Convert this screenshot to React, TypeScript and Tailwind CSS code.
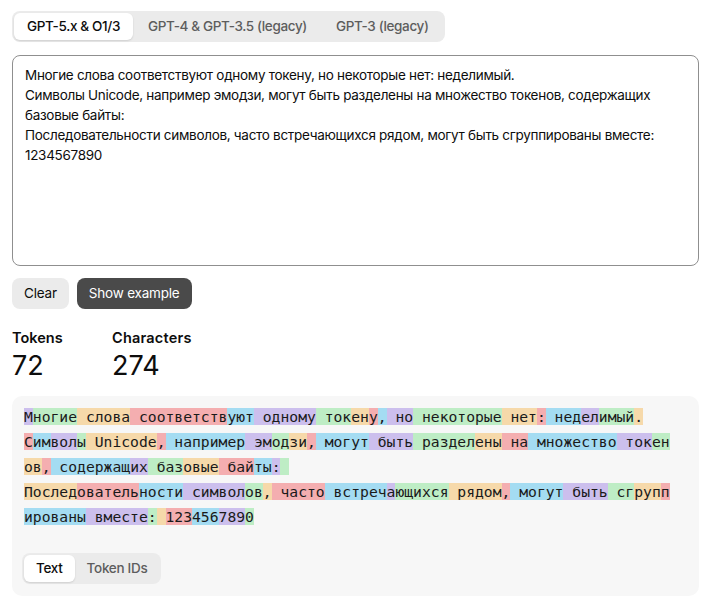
import React from "react";

const COLORS = [
  "bg-[rgba(107,64,216,0.3)]",
  "bg-[rgba(104,222,122,0.4)]",
  "bg-[rgba(244,172,54,0.4)]",
  "bg-[rgba(239,65,70,0.4)]",
  "bg-[rgba(39,181,234,0.4)]",
];

// [text, lineBreakAfter]
const TOKENS: [string, boolean][] = [
  ["М", false], ["ногие", false], [" слова", false], [" соответств", false], ["уют", false],
  [" одному", false], [" ток", false], ["ен", false], ["у", false], [",", false],
  [" но", false], [" некоторые", false], [" нет", false], [":", false], [" нед", false],
  ["ел", false], ["имый", false], [".", true],
  ["С", false], ["им", false], ["вол", false], ["ы", false], [" Unicode", false],
  [",", false], [" например", false], [" эм", false], ["од", false], ["зи", false],
  [",", false], [" могут", false], [" быть", false], [" раздел", false], ["ены", false],
  [" на", false], [" множество", false], [" ток", false], ["ен", true],
  ["ов", false], [",", false], [" содержащ", false], ["их", false], [" баз", false],
  ["овые", false], [" бай", false], ["ты", false], [":", false], ["\u00a0", true],
  ["Послед", false], ["ователь", false], ["ности", false], [" символ", false], ["ов", false],
  [",", false], [" часто", false], [" встреч", false], ["а", false], ["ющихся", false],
  [" рядом", false], [",", false], [" могут", false], [" быть", false], [" сг", false],
  ["руп", false], ["п", true],
  ["ированы", false], [" вместе", false], [":", false], ["\u00a0", false],
  ["123", false], ["456", false], ["789", false], ["0", false],
];

const SAMPLE =
  "Многие слова соответствуют одному токену, но некоторые нет: неделимый.\nСимволы Unicode, например эмодзи, могут быть разделены на множество токенов, содержащих базовые байты:\nПоследовательности символов, часто встречающихся рядом, могут быть сгруппированы вместе:\n1234567890";

export default function App() {
  return (
    <div className="min-h-[606px] w-[717px] bg-white font-['Inter',sans-serif] text-[#0d0d0d]">
      <div className="flex w-[711px] flex-col px-3 pt-[11px]">
        {/* model tabs */}
        <div className="flex h-[31px] w-fit items-center rounded-lg bg-[#ebebeb] p-[2px] text-[13.5px] font-medium tracking-[-0.35px]">
          <div className="flex h-[27px] items-center rounded-[6px] bg-white px-[13px] shadow-[0_1px_2px_rgba(0,0,0,0.12)]">
            GPT-5.x &amp; O1/3
          </div>
          <div className="flex h-[27px] items-center px-[15px] text-[#5d5d5d]">
            GPT-4 &amp; GPT-3.5 (legacy)
          </div>
          <div className="flex h-[27px] items-center px-[14px] text-[#5d5d5d]">GPT-3 (legacy)</div>
        </div>

        {/* textarea */}
        <textarea
          className="mt-[13px] h-[211px] w-[687px] resize-none rounded-lg border border-[#8f8f8f] px-3 py-[9px] font-['Inter',sans-serif] text-[13.5px] leading-[20px] tracking-[-0.3px] text-[#0d0d0d] outline-none"
          defaultValue={SAMPLE}
        />

        {/* buttons */}
        <div className="mt-[12px] flex gap-2 text-[13.5px] tracking-[-0.2px]">
          <button className="h-[31px] rounded-lg bg-[#ebebeb] px-3 text-[#0d0d0d]">Clear</button>
          <button className="h-[31px] rounded-lg bg-[#4a4a4a] px-3 text-white">Show example</button>
        </div>

        {/* stats */}
        <div className="mt-[20px] flex gap-[50px]">
          <div className="flex w-[50px] flex-col">
            <div className="text-[14.5px] font-semibold leading-[18px]">Tokens</div>
            <div className="mt-[4px] text-[27px] leading-[30px]">72</div>
          </div>
          <div className="flex flex-col">
            <div className="text-[14.5px] font-semibold leading-[18px] tracking-[0.2px]">Characters</div>
            <div className="mt-[4px] text-[27px] leading-[30px]">274</div>
          </div>
        </div>

        {/* tokens box */}
        <div className="mt-[15px] flex h-[200px] w-[687px] flex-col rounded-[10px] bg-[#f7f7f7] pt-2">
          <div className="whitespace-pre px-3 font-['DejaVu_Sans_Mono',monospace] text-[14.7px] leading-[25px] text-[#1a1a1a]">
            {TOKENS.map(([t, br], i) => (
              <React.Fragment key={i}>
                <span className={COLORS[i % 5]}>{t}</span>
                {br ? <br /> : null}
              </React.Fragment>
            ))}
          </div>
          <div className="ml-[10px] mt-[24px] flex h-[31px] w-fit items-center rounded-lg bg-[#ebebeb] p-[2px] text-[13.5px] font-medium tracking-[-0.3px]">
            <div className="flex h-[27px] items-center rounded-[6px] bg-white px-[12px] shadow-[0_1px_2px_rgba(0,0,0,0.12)]">
              Text
            </div>
            <div className="flex h-[27px] items-center px-[12px] text-[#5d5d5d]">Token IDs</div>
          </div>
        </div>
      </div>
    </div>
  );
}
